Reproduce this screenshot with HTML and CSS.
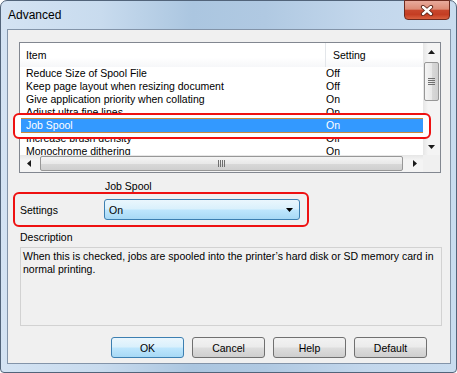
FILE: index.html
```html
<!DOCTYPE html>
<html lang="en">
<head>
    <meta charset="UTF-8">
    <meta name="viewport" content="width=device-width, initial-scale=1.0">
    <title>Advanced</title>
    <link rel="stylesheet" href="styles.css">
</head>
<body>
    <div class="window">
        <div class="titlebar">
            <span class="title">Advanced</span>
            <div class="close-btn">
                <svg width="14" height="11" viewBox="0 0 14 11">
                    <path d="M3 2 L11 9 M11 2 L3 9" stroke="#5a2418" stroke-width="4.2" stroke-linecap="round"/>
                    <path d="M3 2 L11 9 M11 2 L3 9" stroke="#fff" stroke-width="2.4" stroke-linecap="round"/>
                </svg>
            </div>
        </div>

        <div class="client">
            <!-- lista de itens -->
            <div class="listview">
                <div class="list-content">
                    <div class="list-header">
                        <div class="col-item">Item</div>
                        <div class="col-setting">Setting</div>
                    </div>
                    <div class="list-row"><span class="cell-item">Reduce Size of Spool File</span><span class="cell-value">Off</span></div>
                    <div class="list-row"><span class="cell-item">Keep page layout when resizing document</span><span class="cell-value">Off</span></div>
                    <div class="list-row"><span class="cell-item">Give application priority when collating</span><span class="cell-value">On</span></div>
                    <div class="list-row"><span class="cell-item">Adjust ultra fine lines</span><span class="cell-value">On</span></div>
                    <div class="list-row selected"><span class="cell-item">Job Spool</span><span class="cell-value">On</span></div>
                    <div class="list-row"><span class="cell-item">Increase brush density</span><span class="cell-value">Off</span></div>
                    <div class="list-row"><span class="cell-item">Monochrome dithering</span><span class="cell-value">On</span></div>
                </div>
                <div class="vscroll">
                    <div class="sb-btn">
                        <svg width="7" height="4" viewBox="0 0 7 4"><polygon points="0,4 3.5,0 7,4" fill="#1a1a1a"/></svg>
                    </div>
                    <div class="sb-track">
                        <div class="thumb-v">
                            <svg width="7" height="7" viewBox="0 0 7 7">
                                <path d="M0 0.5 H7 M0 2.5 H7 M0 4.5 H7 M0 6.5 H7" stroke="#6f6f6f" stroke-width="1"/>
                            </svg>
                        </div>
                    </div>
                    <div class="sb-btn">
                        <svg width="7" height="4" viewBox="0 0 7 4"><polygon points="0,0 7,0 3.5,4" fill="#1a1a1a"/></svg>
                    </div>
                </div>
                <div class="hscroll">
                    <div class="sb-btn">
                        <svg width="4" height="7" viewBox="0 0 4 7"><polygon points="4,0 4,7 0,3.5" fill="#1a1a1a"/></svg>
                    </div>
                    <div class="sb-track">
                        <div class="thumb-h">
                            <svg width="7" height="7" viewBox="0 0 7 7">
                                <path d="M0.5 0 V7 M2.5 0 V7 M4.5 0 V7 M6.5 0 V7" stroke="#6f6f6f" stroke-width="1"/>
                            </svg>
                        </div>
                    </div>
                    <div class="sb-btn">
                        <svg width="4" height="7" viewBox="0 0 4 7"><polygon points="0,0 4,3.5 0,7" fill="#1a1a1a"/></svg>
                    </div>
                </div>
                <div class="sb-corner"></div>
            </div>

            <!-- marcacao vermelha sobre a linha selecionada -->
            <div class="mark-row"></div>

            <div class="caption">Job Spool</div>

            <div class="settings-row">
                <span class="settings-label">Settings</span>
                <div class="combo">
                    <span>On</span>
                    <svg width="7" height="4" viewBox="0 0 7 4"><polygon points="0,0 7,0 3.5,4" fill="#000"/></svg>
                </div>
            </div>

            <div class="desc-label">Description</div>
            <div class="desc-box">When this is checked, jobs are spooled into the printer’s hard disk or SD memory card in normal printing.</div>

            <div class="buttons">
                <button class="btn default">OK</button>
                <button class="btn">Cancel</button>
                <button class="btn">Help</button>
                <button class="btn">Default</button>
            </div>
        </div>
    </div>
</body>
</html>
```

FILE: styles.css
```css
* {
    box-sizing: border-box;
}
body {
    margin: 0;
    font-family: "Liberation Sans", Arial, sans-serif;
    font-size: 10.5px;
    color: #000;
    background: #fff;
}
.window {
    width: 457px;
    height: 373px;
    display: flex;
    flex-direction: column;
    padding: 0 5px 8px 6px;
    border: 1px solid #52647a;
    border-radius: 7px 7px 4px 4px;
    background: linear-gradient(90deg, #d4e3f3 0%, #c8dbee 22%, #abc6e0 42%, #b0c9e2 58%, #c3d7ec 80%, #c9dcef 100%);
}
.titlebar {
    height: 28px;
    display: flex;
    align-items: center;
    padding-left: 1px;
}
.title {
    font-size: 12px;
}
.close-btn {
    margin-left: auto;
    margin-right: 1px;
    margin-top: -1px;
    align-self: flex-start;
    width: 46px;
    height: 20px;
    display: flex;
    align-items: center;
    justify-content: center;
    border: 1px solid #6e2a1f;
    border-radius: 0 0 4px 4px;
    background: linear-gradient(180deg, #e8aa9c 0%, #dd8b76 45%, #c8462c 52%, #c43d23 75%, #d9603f 100%);
}
.client {
    flex: 1;
    position: relative;
    display: flex;
    flex-direction: column;
    border: 1px solid #8394a9;
    background: #f0f0f0;
}

/* lista */
.listview {
    margin: 12px 0 0 11px;
    width: 422px;
    height: 131px;
    border: 1px solid #828790;
    background: #fff;
    display: grid;
    grid-template-columns: 1fr 17px;
    grid-template-rows: 1fr 17px;
}
.list-content {
    overflow: hidden;
}
.list-header {
    height: 24px;
    display: flex;
    align-items: center;
    background: linear-gradient(180deg, #ffffff 0%, #ffffff 60%, #f6f7f9 100%);
}
.col-item {
    width: 305px;
    padding-left: 6px;
}
.col-setting {
    height: 100%;
    display: flex;
    align-items: center;
    padding-left: 7px;
    border-left: 1px solid #e3e6ea;
}
.list-row {
    height: 13px;
    line-height: 13px;
    display: flex;
    white-space: nowrap;
}
.cell-item {
    width: 305px;
    padding-left: 6px;
}
.cell-value {
    padding-left: 1px;
}
.list-row.selected {
    position: relative;
    z-index: 2;
    height: 15px;
    margin: -1px 0 -1px 1px;
    border-top: 1px solid #c98a3c;
    border-bottom: 1px solid #c98a3c;
    background: #3399ff;
    color: #fff;
}
.list-row.selected .cell-item {
    width: 304px;
    padding-left: 5px;
}

/* barras de rolagem */
.vscroll {
    display: flex;
    flex-direction: column;
    background: linear-gradient(90deg, #e6e6e6 0%, #f4f4f4 30%, #f4f4f4 100%);
}
.hscroll {
    display: flex;
    background: linear-gradient(180deg, #e6e6e6 0%, #f4f4f4 30%, #f4f4f4 100%);
}
.sb-btn {
    width: 17px;
    height: 17px;
    display: flex;
    align-items: center;
    justify-content: center;
}
.vscroll .sb-track {
    flex: 1;
    padding: 2px 1px 0 1px;
}
.hscroll .sb-track {
    flex: 1;
    display: flex;
    padding: 1px 3px 1px 3px;
}
.thumb-v {
    height: 39px;
    display: flex;
    align-items: center;
    justify-content: center;
    border: 1px solid #979797;
    border-radius: 2px;
    background: linear-gradient(90deg, #f4f4f4 0%, #e9e9e9 50%, #d9d9d9 51%, #cfcfcf 100%);
}
.thumb-h {
    flex: 1;
    display: flex;
    align-items: center;
    justify-content: center;
    border: 1px solid #979797;
    border-radius: 2px;
    background: linear-gradient(180deg, #f4f4f4 0%, #e9e9e9 50%, #d9d9d9 51%, #cfcfcf 100%);
}
.sb-corner {
    background: #f0f0f0;
}

/* marcacao */
.mark-row {
    position: absolute;
    left: 5px;
    top: 83px;
    width: 418px;
    height: 26px;
    z-index: 1;
    border: 2px solid #ee1111;
    border-radius: 6px;
    background: #fff;
}

.caption {
    margin: 7px 0 0 97px;
    line-height: 12px;
}
.settings-row {
    margin-left: 5px;
    width: 296px;
    height: 35px;
    display: flex;
    align-items: center;
    padding: 0 7px 0 5px;
    border: 2px solid #ee1111;
    border-radius: 6px;
}
.settings-label {
    flex: 1;
}
.combo {
    width: 196px;
    height: 21px;
    display: flex;
    align-items: center;
    justify-content: space-between;
    padding: 0 6px 0 4px;
    border: 1px solid #3c7fb1;
    border-radius: 3px;
    background: linear-gradient(180deg, #eaf6fd 0%, #d9f0fc 48%, #bee6fd 52%, #a7d9f5 100%);
}
.desc-label {
    margin: 4px 0 0 12px;
    line-height: 13px;
}
.desc-box {
    margin: 3px 0 0 12px;
    width: 422px;
    height: 79px;
    padding: 2px 2px;
    line-height: 13px;
    border: 1px solid #d2d2d2;
}
.buttons {
    margin-top: 11px;
    display: flex;
    justify-content: flex-end;
    gap: 8px;
    padding-right: 23px;
}
.btn {
    width: 73px;
    height: 21px;
    padding: 0;
    font-family: "Liberation Sans", Arial, sans-serif;
    font-size: 10.5px;
    color: #000;
    border: 1px solid #707070;
    border-radius: 3px;
    background: linear-gradient(180deg, #f2f2f2 0%, #ebebeb 48%, #dddddd 52%, #cfcfcf 100%);
}
.btn.default {
    border-color: #3c7fb1;
    background: linear-gradient(180deg, #eaf6fd 0%, #d9f0fc 48%, #bee6fd 52%, #a7d9f5 100%);
}
```
